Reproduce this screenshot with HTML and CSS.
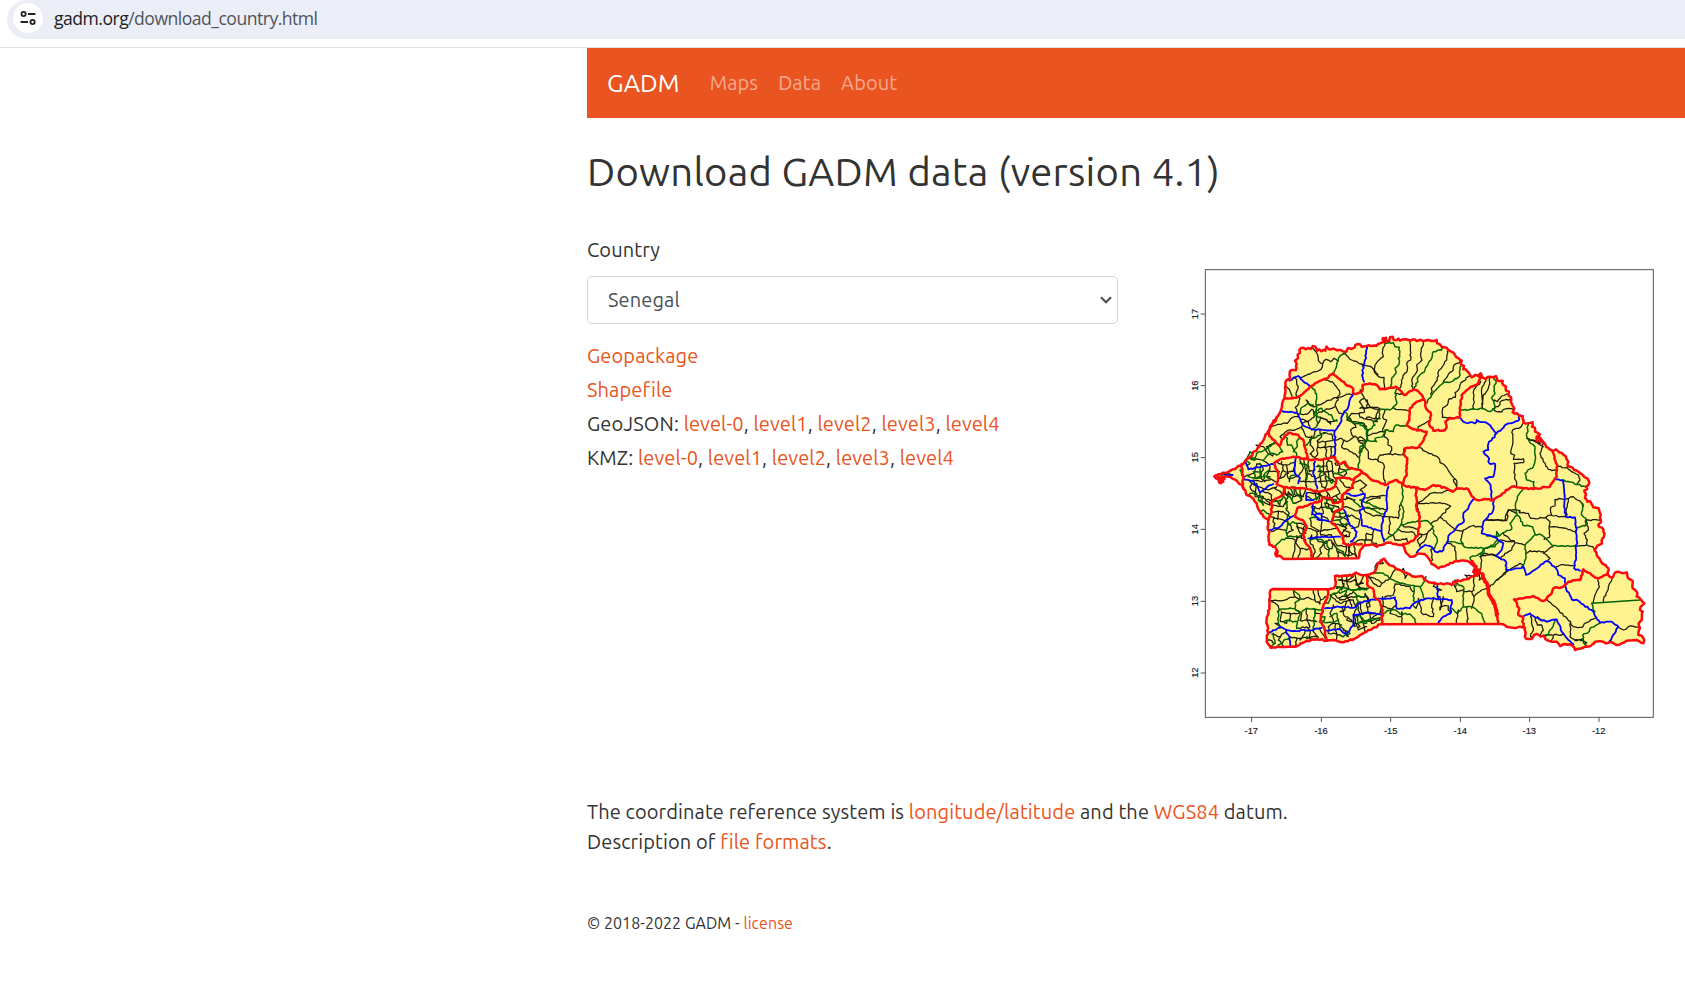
FILE: index.html
```html
<!DOCTYPE html>
<html lang="en">
<head>
<meta charset="utf-8">
<title>GADM</title>
<link rel="stylesheet" href="styles.css">
</head>
<body>
<div class="toolbar">
  <div class="address">
    <span class="site-info">
      <svg width="16" height="16" viewBox="0 0 16 16" fill="none" stroke="#202124" stroke-width="1.8"><circle cx="3.6" cy="4" r="2.1"/><path d="M8 4h7.4M.6 12H8"/><circle cx="12.6" cy="12" r="2.1"/></svg>
    </span>
    <span class="url">gadm.org<span class="path">/download_country.html</span></span>
  </div>
</div>
<div class="page">
  <nav class="navbar">
    <a class="brand">GADM</a><a class="nav-maps">Maps</a><a class="nav-data">Data</a><a class="nav-about">About</a>
  </nav>
  <h1>Download GADM data (version 4.1)</h1>
  <div class="row">
    <div class="form">
      <label>Country</label>
      <div class="select"><span>Senegal</span>
        <svg width="12" height="8" viewBox="0 0 12 8" fill="none" stroke="#495057" stroke-width="2.1"><path d="M1 1.2l5 5 5-5"/></svg>
      </div>
      <ul class="files">
        <li><a>Geopackage</a></li>
        <li><a>Shapefile</a></li>
        <li class="geo">GeoJSON: <a>level-0</a>, <a>level1</a>, <a>level2</a>, <a>level3</a>, <a>level4</a></li>
        <li class="kmz">KMZ: <a>level-0</a>, <a>level1</a>, <a>level2</a>, <a>level3</a>, <a>level4</a></li>
      </ul>
    </div>
    <svg class="map" width="505" height="490" viewBox="0 0 1515 1470">
      <rect class="frame" x="76" y="29" width="1344" height="1343"/>
      <path class="frame" d="M62 162H76M62 377H76M62 593H76M62 808H76M62 1024H76M62 1239H76M215 1372V1386M424 1372V1386M632 1372V1386M841 1372V1386M1049 1372V1386M1257 1372V1386"/>
      <g class="ticks">
        <text x="214" y="1421">-17</text><text x="423" y="1421">-16</text><text x="632" y="1421">-15</text><text x="841" y="1421">-14</text><text x="1048" y="1421">-13</text><text x="1256" y="1421">-12</text>
        <text transform="translate(54 162) rotate(-90)">17</text><text transform="translate(54 377) rotate(-90)">16</text><text transform="translate(54 592) rotate(-90)">15</text><text transform="translate(54 808) rotate(-90)">14</text><text transform="translate(54 1023) rotate(-90)">13</text><text transform="translate(54 1238) rotate(-90)">12</text>
      </g>
      <path class="land" d="M103 649L140 638 188 613 210 590 232 565 262 520 290 472 306 440 314 415 318 362 330 358 330 333 347 331 350 312 345 302 354 294 358 270 370 263 385 267 398 258 410 273 430 271 440 260 446 270 475 270 500 276 505 264 515 267 532 252 548 262 570 256 590 257 612 246 608 235 618 243 628 232 638 230 645 240 680 241 700 238 720 243 770 240 775 253 800 263 825 285 845 302 850 325 870 340 870 350 895 347 900 340 905 355 930 350 948 348 952 362 968 362 975 385 985 395 992 425 1003 445 1000 457 1028 468 1030 488 1058 487 1060 505 1080 525 1072 540 1090 548 1117 572 1135 572 1158 590 1165 618 1195 635 1215 652 1228 668 1215 685 1218 718 1240 735 1258 745 1262 775 1258 800 1270 808 1270 840 1262 855 1243 868 1250 885 1285 930 1283 943 1297 950 1310 935 1340 937 1345 955 1358 970 1370 1005 1393 1030 1380 1050 1388 1080 1378 1100 1380 1125 1393 1140 1385 1148 1340 1142 1310 1153 1280 1147 1245 1145 1215 1160 1185 1170 1170 1158 1140 1158 1130 1145 1100 1140 1095 1130 1070 1122 1055 1137 1037 1135 1035 1103 980 1100 950 1092 600 1093 560 1115 490 1147 440 1138 380 1142 345 1160 272 1163 260 1145 265 1120 260 1080 268 1040 270 995 278 987 460 988 465 980 465 948 510 946 528 938 560 945 585 935 595 908 613 896 625 912 660 930 690 943 725 948 740 962 770 973 815 975 820 965 860 958 885 948 890 940 880 910 855 902 830 903 800 915 775 925 755 912 742 890 715 880 690 890 675 870 668 855 620 848 590 860 550 855 535 895 310 897 290 885 285 860 268 855 265 780 240 755 230 730 200 705 188 680 170 662 145 650 125 653 130 665 118 668Z"/>

      <g class="commune">
        <!-- north-west -->
        <g transform="translate(60 210)">
          <path d="M338 55L352 72 355 92 368 102 363 118 330 132 300 142M368 102L378 88 392 95 402 85 412 92M430 70L455 90 485 102 490 112M485 102L516 112 534 134M376 150L398 156 412 175 420 190 410 205M412 205L445 192M356 225L380 212 412 203M415 210L405 225 418 250M290 155L295 170 288 190 290 204M258 168L268 178 276 198M300 205L296 222 286 232 294 252M292 260L272 266 262 280 220 288M318 210L330 226 348 230M335 238L322 252 300 252M340 240L343 260 330 270 305 280M352 250L375 240 395 235M360 262L385 275 410 270M330 290L325 275 305 268M352 285L362 262 380 268 392 282M305 290L285 300 262 302 240 320M310 300L318 320 340 325 348 300M360 302L365 320 352 332 352 375M370 308L395 312 400 330 375 336 352 335M376 336L380 382M356 352L402 350M330 345L342 360 330 372 345 382M395 352L392 380M336 318L332 340M405 330L425 325 440 335 465 318 475 330 500 334M430 335L425 352 455 366 475 382M460 320L452 300 468 292 460 280 445 262 455 250 492 248M475 334L490 344 480 365"/>
          <path d="M440 270L462 275 492 280 500 290M492 236L520 232 540 236M492 205L478 215 488 230M500 262L515 264 540 266M500 318L540 305M168 345L190 350 205 372 218 378M150 385L185 390 205 402M200 350L225 340M180 402L190 420 178 440 195 455M170 402L160 430 135 440M210 410L200 440 225 455M215 425L238 425M160 450L185 455 210 450M235 400L262 405 285 395M245 395L250 420 238 445M260 405L265 430 240 445M255 425L280 425 285 405M262 430L268 455M270 445L292 440M300 390L310 415 300 430M312 392L318 430 345 440M325 395L328 425 345 420M350 410L380 408 385 392M370 395L372 435 350 445M355 425L400 425M382 410L388 445 402 455M395 395L400 440M355 455L400 450M360 440L365 470M375 430L380 465M405 400L420 410 412 430 430 440M405 445L425 445 440 430M305 455L340 455M320 430L318 465M418 415L435 420"/>
          <path d="M150 455L170 470 205 480 230 470M170 460L165 495M190 485L215 495 215 510M165 500L190 505 210 520M250 480L265 500 255 520M265 485L280 500 300 495M300 480L305 510 285 520M320 490L345 488 375 500M345 480L350 510M360 490L358 515M385 490L380 520M410 470L420 490 400 500M420 450L435 470 460 475M462 460L480 450 500 465 480 480 490 490M440 500L460 510M375 520L410 530M500 515L520 505 540 505"/>
        </g>
        <!-- north-centre -->
        <g transform="translate(540 210)">
          <path d="M75 40L68 62 70 80 45 105 42 122 55 140 72 142 74 172M150 38L152 90 140 100 142 120 128 145 122 172M190 38L182 70 186 90 170 105 172 122 158 142 155 168M262 65L260 90 235 125 232 150 218 170 212 192M300 95L282 105 280 120 262 140 250 155M325 140L300 165 295 180 285 188 286 202 268 206 262 225 248 234 247 262M298 264L247 262M362 155L342 178 340 234M378 152L365 178 368 235M390 142L385 175 370 195 366 236M440 192L425 198 412 215 404 210M450 208L425 212 415 230M404 242L425 246 432 238 455 236M105 190L130 192M0 180L12 205 30 232 55 238M0 235L30 232M55 240L48 260 52 275 0 262M22 210L20 232M75 240L68 262 80 270 72 290 68 305M108 238L138 240 150 245M175 290L208 272M78 300L72 320 85 330 84 345 95 352 92 372 128 374 132 355M92 372L60 375 52 390 72 405 70 432 75 460M0 320L15 330M15 350L25 365 25 385 55 390M178 352L200 366 232 380 240 398 260 412 272 432 290 452 290 472M458 300L482 292 488 282M458 300L456 350 452 370 464 375 460 388 490 386 490 398 462 400 464 440 470 466M500 325L520 330 540 340"/>
        </g>
        <!-- east -->
        <g transform="translate(900 420)">
          <path d="M190 130L180 160 190 185 205 208 230 212M232 200L262 202 275 215 295 225 300 240 292 250M142 115L165 125 190 140M20 358L72 362 85 330 108 340M118 338L145 340 152 355 195 354 210 345 220 348 250 350M198 352L210 365 208 412 192 418M208 380L250 384 286 395M225 300L225 318 212 322 215 345M225 298L265 296 262 320 258 350M265 296L280 290 292 300 302 305 310 318M318 360L360 360M318 362L325 390 312 400 322 420 320 435 290 438M320 435L338 440 345 450M70 400L85 412 105 428 130 434M105 428L95 450 75 460 65 470M140 460L150 452 190 455 195 462 210 475M190 460L205 448 218 440M230 500L250 494 285 496M50 540L85 512M0 470L18 460 48 466"/>
        </g>
        <!-- south-west -->
        <g transform="translate(60 660)">
          <path d="M220 75L250 80 262 65M215 95L250 95 270 110M212 110L245 118 262 125M220 120L225 145 255 150M215 155L235 145M262 175L290 180 300 170 318 180M265 130L280 150 262 160M290 130L300 160 318 160M295 130L320 135M285 185L300 205 320 210M290 170L285 205 278 232M300 205L295 236M318 150L290 140M315 130L305 175M330 115L335 140 355 150M325 145L350 155 380 150 410 145M335 165L330 185 345 210 340 230M350 155L352 180M365 130L362 165 395 165M372 190L360 205 365 220 345 235M355 185L378 190M395 185L410 205 415 235M400 170L410 195 435 200M372 195L376 184 386 180 396 185 400 195 396 206 386 210 376 205 372 195M440 195L435 225 415 215M450 200L445 235M462 200L470 230M430 225L455 225M345 80L335 105M350 85L385 80 395 95M365 70L370 100M385 75L400 100M340 60L325 50M310 45L320 20M370 110L385 120M405 110L430 112 445 125M420 125L440 145 425 160M402 130L430 140 448 130M430 150L450 158 448 170M440 165L425 175M415 80L420 105M395 60L415 70M410 50L425 60M225 25L245 40 270 45M200 60L225 60 240 75M150 20L170 45 190 50M180 60L210 75M280 20L285 45 310 50M350 30L365 50M375 25L390 50M258 85L268 100M235 100L232 118"/>
          <path d="M212 362L240 362 280 352M282 330L284 350 298 358 325 352 342 360M340 330L345 360 360 372M215 365L235 378 240 392M245 395L242 425 260 430M245 398L275 402 295 400M270 400L268 420M290 390L305 400 302 420M320 385L322 420 350 425M342 385L345 400 362 402M300 422L325 420M295 445L320 440 328 450M320 420L330 440M355 340L362 360 375 350M400 340L415 355 440 345M425 290L432 320 410 325M415 300L445 300 460 290M432 310L425 330M465 285L468 315 490 310M490 290L475 320 500 330M395 350L420 370 450 360M400 375L390 400 400 420M455 375L440 350 460 335M425 380L435 410 455 420M385 440L400 430 425 435M405 440L410 475M385 460L420 465M430 450L445 470M470 370L480 400 470 410M495 340L510 365M500 370L505 400 520 402M470 430L475 450 500 440M490 430L495 455M510 405L515 430 540 420M505 290L520 310 540 320M240 440L225 430M315 455L300 480M330 452L330 475M270 470L300 475 350 470M340 455L355 472M250 460L235 480 250 498M215 462L240 470M210 480L225 490M290 480L285 498M360 450L375 475"/>
        </g>
        <!-- south-centre -->
        <g transform="translate(480 660)">
          <path d="M230 72L300 68 332 78 325 85 300 112 272 132M235 88L232 75M230 72L250 60 270 40 310 36 335 30M340 0L350 20M300 112L322 130 345 150 368 152M362 180L370 150 395 138 420 140M440 120L500 122 505 90 540 92M325 190L345 200 348 238M272 210L278 240M235 165L262 160 280 140M245 170L232 180 240 200M262 160L255 180 240 195M190 140L225 145M185 155L215 155 225 165M175 180L200 175M145 160L160 165 165 180M140 110L175 115 180 75M150 110L148 150M60 80L100 85 140 88M60 60L90 50 140 48M20 80L45 92M75 95L95 105 135 110M60 120L55 140 35 145M20 110L35 105 60 120M80 160L75 190M100 155L95 185 110 190M35 190L60 180 90 180M25 190L30 215 50 232M0 160L20 170M0 60L30 55 45 60M420 230L455 222 480 235M480 180L520 185M450 320L500 275 540 250M418 300L425 240"/>
          <path d="M120 240L130 250 110 250 100 280M85 290L115 300 125 310 150 295 165 270M190 265L195 295 205 280 225 290M165 312L210 320 218 335M165 315L160 345 135 350M0 300L25 305 50 300M20 290L25 325M45 300L60 325 80 325M0 360L35 350 75 350M20 365L15 390 0 395M40 360L50 385 40 405M60 365L65 400 80 400M80 350L90 380M95 415L120 400 125 375M128 350L130 380 160 390M165 378L150 400 180 410M185 395L185 430M235 355L245 400 280 410M240 365L228 385M280 352L275 375 280 408M300 350L305 380 325 378M280 320L305 330M340 310L350 335 370 330M352 300L348 318M375 285L400 290 402 330M375 335L395 335 402 350 425 330 445 325M402 350L395 385M355 390L350 430M382 380L382 430M325 380L330 400M310 350L300 390M20 420L50 430 60 440M45 405L45 440M60 410L70 425 95 425M0 440L25 455"/>
        </g>
        <!-- south-east -->
        <g transform="translate(900 780)">
          <path d="M200 238L272 305M272 310L280 320 305 322 320 308 345 295M270 310L270 350 285 360 310 358M355 175L358 200 345 225 340 245M395 180L385 205 370 245M415 322L430 330 450 318 480 320M152 290L160 325 152 350M165 300L172 315 185 315 190 330 180 345M172 290L185 300 205 305M215 360L220 345 245 345M285 362L310 360 320 368M190 345L215 345"/>
        </g>
      </g>

      <g class="arrond">
        <g transform="translate(60 210)">
          <path d="M440 65L415 85 405 120M330 168L345 180 350 200 348 240 355 262M300 250L305 232 325 220 340 225M348 240L365 235 375 245 395 255 400 270 412 272M345 245L352 285 335 300M440 250L440 262 460 280 490 280 500 300 500 330 480 350 478 382 475 415M430 395L440 410M262 325L262 345 275 345 290 375M290 335L292 350 280 365M320 345L335 325 360 315 375 310M225 335L210 350 185 365 170 370 165 385 150 380M205 352L210 372 190 390M150 365L142 382 165 390M215 370L230 375 248 365M135 392L150 400M160 425L165 445 185 440 180 425 162 428M205 422L195 430 190 450M145 440L165 445 190 440 210 440M180 400L182 425M62 436L90 432M120 420L130 440M270 440L285 435M300 400L320 405M355 405L365 425 358 440M380 440L395 460M405 430L430 425 455 415M322 410L320 450M180 500L190 525M150 490L170 490M255 475L250 495 240 520M270 500L280 520M285 470L290 490 305 510M365 500L380 510 410 510M460 510L480 530"/>
        </g>
        <g transform="translate(540 210)">
          <path d="M80 40L100 38 105 50 118 52 116 105 105 115 108 130 95 145 92 168M245 60L220 65 215 85 205 100 195 120 175 140 168 168M300 112L298 140 275 155 250 158 232 175 215 195 202 218M108 180L106 200 110 222 90 240 60 238 58 262 40 275 45 285 25 300 22 325M0 285L22 298 22 330 50 335 45 325 68 320 75 300 100 305 108 285 138 288M22 330L15 345 0 370M302 240L370 236 390 245 405 235 402 215 395 205 405 190 402 170 408 152 400 142M505 285L500 320 508 335 525 350 525 390 520 410 495 430 500 450 522 455 522 470"/>
        </g>
        <g transform="translate(900 420)">
          <path d="M130 265L112 290 106 318 112 345 90 370 95 388 70 398 50 410 20 408M118 350L128 375 158 380 165 402 185 405 218 438 290 438M165 405L135 435 138 475 125 500M245 240L318 260M308 310L305 345 318 355 315 378 290 382M50 395L52 420 40 435 15 445 0 460"/>
        </g>
        <g transform="translate(60 660)">
          <path d="M262 110L262 138 258 155 265 175 245 178 228 195M265 135L280 125M330 180L345 175 370 182M330 115L345 112 360 118M350 100L335 80M375 68L380 85 400 85M380 185L388 210 385 235M405 200L430 215 435 230M395 120L420 120 445 105M400 95L430 100M215 65L245 60M245 40L258 60 262 85M270 25L280 45 275 60M180 40L175 60 190 75M190 90L200 100M310 165L265 170M480 60L540 85M355 50L340 60"/>
          <path d="M280 332L298 345 298 360 285 368 285 385 240 388 232 395M285 385L300 400 320 385 345 388 365 390M300 400L292 425 290 445M255 422L292 425M235 395L235 430 240 445M345 388L340 450M410 320L440 325 460 330 490 325M390 345L410 340 425 325M395 345L385 370M390 410L410 400 415 418 405 425 380 428M415 418L422 450M465 340L475 365 470 385M470 405L475 430 520 415 540 415M465 350L495 350M220 460L225 490 215 498M235 495L258 478 270 475M430 470L450 460M500 430L480 425M365 430L375 410M345 480L320 470"/>
        </g>
        <g transform="translate(480 660)">
          <path d="M185 18L190 50 182 70 192 95 185 120 182 135 210 128 262 122 278 138 280 160 292 180 285 202M182 135L170 155 138 178M80 82L130 102M100 280L130 280 160 300 180 310 240 320 255 300 258 290M240 320L248 340 250 350M222 325L220 360M325 185L365 190 375 202 435 205 465 200 475 185M430 205L432 220 390 232M362 180L370 192M345 300L355 315 370 320 370 380 400 382 425 400 435 428M370 380L350 400 335 385M130 400L160 388 180 402 210 402 225 418 228 430M60 405L75 425 120 415M0 340L20 330 60 330 85 325M20 330L15 350M0 135L20 130"/>
        </g>
        <g transform="translate(900 780)">
          <path d="M335 250L480 240M335 250L345 275M360 310L330 325 322 340 308 345 312 370 318 375M225 305L210 330 205 345 190 348"/>
        </g>
      </g>

      <g class="dept"><path d="M328 362L355 348 368 362 390 378M305 452L350 458 368 495 395 508 462 512M518 402L505 440 490 462 480 490 465 512 465 582 455 590M562 258L555 300 546 345 552 365M842 475L850 485 885 490 890 480 925 492 950 520 985 490 1015 482 1020 465M950 520L925 552 925 570 910 575 925 592 928 610 946 612 940 650 915 655 932 675 935 715M196 606L205 628 240 622 280 612M190 655L222 665 240 698 262 680 280 672M347 595L345 640 360 655 355 670M405 605L400 635 412 685M380 698L378 720 398 720M398 735L398 762 418 780 450 785M408 762L425 762 425 778 412 778M268 810L300 800 318 780 340 768M385 835L420 832 480 830M492 700L525 708 555 702 545 730 552 745 540 750 545 795 605 815M492 750L508 790 530 815 528 830 512 845M625 680L620 710 622 745 608 775 605 820 612 845M880 718L865 745 850 760 852 785 828 805 805 828 800 850 785 875 765 875 750 858 735 855 710 878M942 718L938 755 910 785 905 820 945 832 970 850 965 870 948 888 978 905 978 930 1015 925 1030 920 1038 945 1060 932 1100 903 1128 925 1135 945 1155 955 1158 985 1175 1018 1195 1022 1240 1055 1260 1088 1295 1085 1315 1100 1288 1145M1128 658L1150 662 1156 770 1185 772 1190 830 1188 900 1182 925 1200 932M1032 1068L1050 1060 1065 1072 1100 1085 1130 1078 1145 1115 1165 1140 1180 1153M435 1045L475 1040 525 1042 540 1028 580 1018 645 1012 650 1045 690 1045 710 1025 740 1015 785 1018 815 1020 812 1060 790 1070 775 1090M772 978L775 1015M268 1118L300 1100 330 1112 385 1112 425 1103M318 1112L328 1130 332 1160M440 1112L480 1108 500 1122 520 1095 520 1065 570 1058 605 1065M135 645L158 645"/></g>

      <g class="region">
        <path d="M103 649L115 643 140 638 188 613 210 590 232 565 262 520 290 472 306 440 314 415 316 390 318 362 330 358 330 333 347 331 350 312 345 302 354 294 353 284 360 278 358 270 370 263 378 268 385 264 393 267 398 258 406 260 410 273 418 268 424 274 430 270 436 272 440 260 446 268 460 266 470 271 482 270 492 275 500 274 505 264 515 267 524 262 526 255 532 252 540 253 545 260 555 259 565 256 575 258 590 257 600 250 612 246 608 237 618 233 618 243 628 242 630 232 638 230 641 240 650 240 655 236 660 242 675 238 690 242 700 238 710 243 720 239 730 244 745 240 755 243 770 240 771 249 780 253 785 260 800 263 812 274 825 285 836 295 845 302 842 312 852 318 850 328 860 332 870 345 875 352 885 345 898 350 902 340 905 352 918 357 930 350 940 352 948 348 952 362 968 362 970 375 978 380 978 392 987 395 985 405 993 412 992 425 1003 445 998 457 1010 460 1018 468 1028 468 1030 488 1045 490 1058 487 1056 500 1064 503 1065 514 1080 523 1070 530 1070 542 1082 540 1092 548 1098 560 1117 572 1128 568 1135 574 1145 578 1158 590 1165 605 1163 618 1178 623 1182 630 1195 635 1205 642 1215 652 1222 655 1228 668 1218 680 1222 687 1213 692 1218 702 1215 714 1222 725 1230 724 1240 742 1256 745 1262 765 1260 775 1263 786 1255 795 1270 808 1272 830 1266 838 1266 850 1243 868 1250 885 1262 903 1285 925 1283 943 1297 953 1302 942 1315 935 1322 938 1340 937 1345 955 1358 963 1358 985 1370 995 1370 1010 1382 1018 1393 1030 1382 1040 1380 1050 1388 1055 1385 1080 1376 1090 1380 1105 1375 1125 1388 1130 1393 1140 1390 1150 1375 1142 1340 1142 1325 1150 1310 1155 1295 1146 1280 1150 1270 1145 1245 1145 1232 1158 1215 1160 1185 1170 1180 1160 1170 1153 1157 1152 1140 1158 1130 1145 1115 1145 1100 1140 1095 1130 1082 1130 1070 1122 1062 1125 1055 1137 1037 1135 1035 1103 1020 1100 1010 1103 980 1100 970 1093 950 1092 600 1093 560 1115 530 1133 490 1147 460 1140 440 1142 410 1138 380 1142 345 1160 300 1161 272 1163 260 1145 260 1128 265 1120 260 1080 268 1040 270 995 278 987 440 988 460 985 465 980 465 948 490 947 510 944 515 948 528 938 540 944 560 945 575 940 585 935 595 908 613 896 618 905 625 912 645 923 660 930 668 935 680 938 690 943 705 950 725 948 740 962 755 968 770 973 800 970 815 975 820 965 845 962 860 958 870 952 885 948 880 935 890 930 882 918 870 908 855 902 830 903 800 915 775 925 755 912 742 890 735 883 715 880 705 888 690 890 675 870 668 855 645 852 620 848 605 855 590 860 575 853 550 858 540 872 535 895 310 897 300 888 290 888 292 872 285 860 268 855 265 830 268 815 263 800 265 780 250 770 240 755 232 740 230 730 215 712 200 705 188 680 170 662 145 650 125 653 130 665 118 668 115 658 103 649"/>
        <path d="M314 415L350 413 375 395 405 370 440 355 460 340 480 358 520 388 522 402 545 395 548 375 570 370 590 375 600 388 648 380 672 405 700 388 720 400 735 422 738 445 752 458 748 495 760 512 795 510 800 502 796 485 808 475 838 473 845 405 860 390 895 368 905 350M732 418L710 425 690 445 688 480 680 495 700 508 740 515 728 545 715 562 675 565 672 585 682 595 680 640 670 670M290 472L270 500 268 528 298 558 305 540 325 518 355 525 372 545 378 570 385 598M185 612L190 685M282 610L300 598 340 590 390 600 430 598 465 592 475 612 495 605 510 625 540 630 575 660 615 675 650 660 680 680 705 682 735 690 760 675 800 685 818 695 830 685 865 688 885 718 940 720 995 680 1060 687 1110 680 1130 650 1132 615 1118 575M282 610L295 640 290 672 312 682 370 685 415 695 450 688 465 680 468 655 500 655 522 660 542 640M314 682L310 705 275 725 275 755 265 780M520 660L518 682 490 702 480 725 460 730 455 715 430 712 425 722 400 730 375 738 352 745 345 770 368 780 380 800 370 825 378 850 390 865 398 895M490 702L488 745 465 755 455 790 470 802 490 830 490 850 500 855 545 852M708 685L710 745 720 770 715 820 700 842 670 852M440 988L445 1000 430 1040 420 1085 432 1100 440 1138M560 945L562 975 578 985 582 1010 600 1025 608 1050 605 1092M890 940L905 940 912 960 925 975 925 1005 945 1035 955 1092M1030 1100L1028 1070 1015 1065 1018 1045 1002 1018 1040 1012 1060 1008 1090 1023 1115 1000 1120 985 1150 980 1165 965 1200 960 1210 928 1235 945 1255 955 1283 940"/>
        <path class="thick" d="M115 652L132 656M118 655L122 668M876 905L888 920 882 935 898 930 892 945M908 942L915 965 925 985 928 1005 945 1035 952 1062M1075 530L1085 545M290 876L290 887M610 236L616 244"/>
      </g>
    </svg>
  </div>
  <p class="crs"><span class="l1">The coordinate reference system is <a>longitude/latitude</a> and the <a>WGS84</a> datum.</span><br><span class="l2">Description of <a>file formats</a>.</span></p>
  <footer>© 2018-2022 GADM - <a>license</a></footer>
</div>
<script src="borders.js"></script>
</body>
</html>
```
FILE: styles.css
```css
* { box-sizing: border-box; }
body {
  margin: 0;
  background: #fff;
  color: #333;
  font: 20px/30px Ubuntu, "Noto Sans", sans-serif;
  letter-spacing: .11px;
  overflow: hidden;
}
a { color: #e95420; text-decoration: none; }
.toolbar {
  height: 48px;
  border-bottom: 1px solid #e0e0e0;
}
.address {
  display: flex;
  align-items: center;
  height: 39px;
  margin-left: 7px;
  padding: 0 0 3px 6px;
  background: #ebeef7;
  border-radius: 20px 0 0 20px;
}
.site-info {
  display: flex;
  align-items: center;
  justify-content: center;
  width: 30px;
  height: 30px;
  border-radius: 50%;
  background: #fff;
}
.url {
  margin-left: 11px;
  font: 17.6px/24px "Open Sans", sans-serif;
  letter-spacing: -.52px;
  color: #202124;
}
.path { color: #50545a; }
.page { margin-left: 587px; }
.navbar {
  display: flex;
  align-items: center;
  height: 70px;
  padding-left: 20px;
  background: #e95420;
}
.navbar a { color: rgba(255, 255, 255, .5); margin-right: 20px; }
.navbar .brand { color: #fff; font-size: 25px; margin-right: 30px; }
h1 {
  margin: 30px 0 0;
  font-size: 40px;
  font-weight: 400;
  line-height: 48px;
  letter-spacing: .23px;
}
.row {
  display: grid;
  grid-template-columns: 531px 505px;
  column-gap: 62px;
  height: 515px;
  margin-top: 39px;
}
.map { height: 490px; margin-top: 25px; letter-spacing: 0; }
label { display: block; line-height: 30px; }
.select {
  display: flex;
  align-items: center;
  justify-content: space-between;
  height: 48px;
  margin-top: 11px;
  padding: 0 5px 0 20px;
  border: 1px solid #ced4da;
  border-radius: 5px;
  color: #495057;
}
.files {
  list-style: none;
  margin: 15px 0 0;
  padding: 0;
  line-height: 34px;
  white-space: nowrap;
}
.crs { margin: 47px 0 0; white-space: nowrap; }
footer { margin-top: 54px; font-size: 16px; line-height: 24px; letter-spacing: .05px; }
.frame { fill: none; stroke: #555; stroke-width: 3; }
.ticks { font: 28px "Liberation Sans", sans-serif; fill: #222; stroke: #222; stroke-width: .5; text-anchor: middle; }
.land { fill: #fff390; }
.commune, .arrond, .dept, .region { fill: none; stroke-linejoin: round; stroke-linecap: round; }
.commune { stroke: #1c1a0c; stroke-width: 3.8; }
.arrond { stroke: #006400; stroke-width: 4.4; }
.dept { stroke: #00f; stroke-width: 5.4; }
.region { stroke: #fb0a10; stroke-width: 7.5; }
.thick { stroke-width: 11; }
```
FILE: borders.js
```js
// Joins loose boundary ends to their nearest neighbour and gives the lines a surveyed, irregular course.
const lines = [];
document.querySelectorAll('.commune path, .arrond path, .dept path, .region path').forEach(path => {
  const t = /translate\((\d+) (\d+)\)/.exec(path.parentNode.getAttribute('transform') || '');
  const dx = t ? +t[1] : 0, dy = t ? +t[2] : 0;
  path.getAttribute('d').split('M').filter(Boolean).forEach(sub => {
    const n = sub.match(/[\d.]+/g).map(Number), pts = [];
    for (let i = 0; i + 1 < n.length; i += 2) pts.push([n[i] + dx, n[i + 1] + dy]);
    lines.push({ path, dx, dy, pts, minor: !!path.closest('.commune, .arrond') });
  });
});

function nearest(p, own) {
  let best = null, bestD = 26;
  for (const l of lines) {
    if (l === own) continue;
    for (let i = 0; i + 1 < l.pts.length; i++) {
      const [a, b] = [l.pts[i], l.pts[i + 1]];
      const vx = b[0] - a[0], vy = b[1] - a[1], len = vx * vx + vy * vy || 1;
      const k = Math.max(0, Math.min(1, ((p[0] - a[0]) * vx + (p[1] - a[1]) * vy) / len));
      const q = [a[0] + k * vx, a[1] + k * vy], d = Math.hypot(p[0] - q[0], p[1] - q[1]);
      if (d < bestD) { bestD = d; best = q; }
    }
  }
  return best;
}

const joined = lines.map(l => {
  if (!l.minor) return l.pts;
  const s = nearest(l.pts[0], l), e = nearest(l.pts[l.pts.length - 1], l);
  return [...(s ? [s] : []), ...l.pts, ...(e ? [e] : [])];
});

const noise = (x, y, k) => {
  const v = Math.sin(x * 12.9898 + y * 78.233 + k * 37.7) * 43758.5453;
  return (v - Math.floor(v) - .5) * 2;
};

const out = new Map();
lines.forEach((l, i) => {
  const pts = joined[i];
  let d = '';
  pts.forEach((p, j) => {
    if (j) {
      const a = pts[j - 1], len = Math.hypot(p[0] - a[0], p[1] - a[1]);
      const steps = len > 110 ? 1 : Math.round(len / 7);
      for (let s = 1; s < steps; s++) {
        const x = a[0] + (p[0] - a[0]) * s / steps, y = a[1] + (p[1] - a[1]) * s / steps;
        d += 'L' + (x - l.dx + noise(x, y, 1) * 2.4).toFixed(1) + ' ' + (y - l.dy + noise(x, y, 2) * 2.4).toFixed(1);
      }
    }
    d += (j ? 'L' : 'M') + (p[0] - l.dx).toFixed(1) + ' ' + (p[1] - l.dy).toFixed(1);
  });
  out.set(l.path, (out.get(l.path) || '') + d);
});
out.forEach((d, path) => path.setAttribute('d', d));
```
